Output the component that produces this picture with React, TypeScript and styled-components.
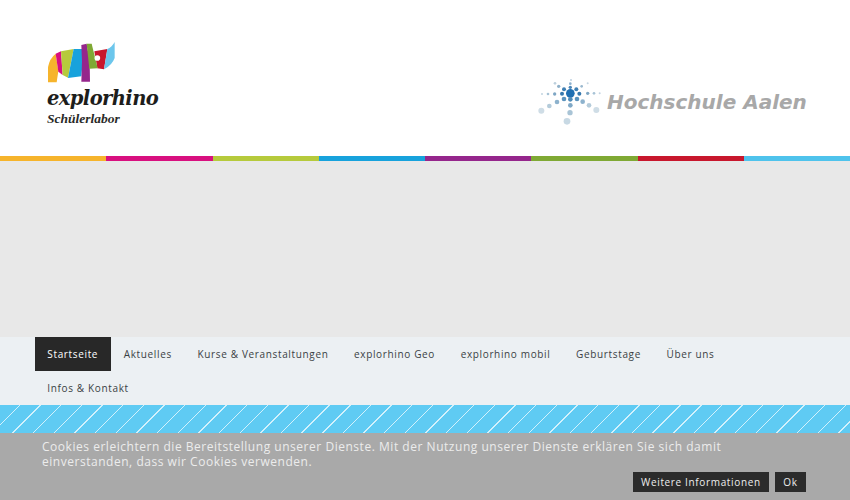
import React from "react";
import styled, { createGlobalStyle } from "styled-components";

const GlobalStyle = createGlobalStyle`
  html, body {
    margin: 0;
    padding: 0;
    height: 100%;
    overflow: hidden;
    background: #fff;
    font-family: "Open Sans", "Liberation Sans", sans-serif;
  }
`;

const menuItems = [
  "Startseite",
  "Aktuelles",
  "Kurse & Veranstaltungen",
  "explorhino Geo",
  "explorhino mobil",
  "Geburtstage",
  "Über uns",
  "Infos & Kontakt",
];

const stripeColors = [
  "#f6b42c",
  "#d8107f",
  "#b6ca3c",
  "#17a2dc",
  "#95268c",
  "#7fa934",
  "#c8172d",
  "#4fc3ec",
];

// dots of the star logo: x, y, radius, colour
const starDots: [number, number, number, string][] = [
  [137, 70, 13, "#1f6fb2"],
  [137, 52, 5, "#4a86b8"],
  [137, 41, 4, "#8fb2cf"],
  [139, 30, 3, "#bcd0e0"],
  [118, 58, 6, "#3f7fb3"],
  [102, 49, 5, "#8fb0c8"],
  [91, 40, 4, "#bdd0dd"],
  [155, 58, 6, "#3f7fb3"],
  [171, 49, 4, "#9bb9cf"],
  [189, 40, 3, "#c5d6e2"],
  [112, 71, 6, "#3678ae"],
  [90, 72, 5, "#7ea6c4"],
  [70, 72, 4, "#a8c3d6"],
  [52, 72, 3, "#c2d4e1"],
  [164, 71, 6, "#3678ae"],
  [189, 70, 5, "#7ea6c4"],
  [208, 70, 4, "#a8c3d6"],
  [225, 70, 3, "#c2d4e1"],
  [118, 87, 7, "#5b93bd"],
  [97, 96, 7, "#8db2cd"],
  [74, 108, 7, "#b4cbda"],
  [50, 122, 9, "#cfdde6"],
  [157, 87, 7, "#5b93bd"],
  [174, 95, 7, "#8db2cd"],
  [193, 106, 7, "#b4cbda"],
  [215, 120, 9, "#cfdde6"],
  [137, 88, 7, "#4f8cb9"],
  [137, 106, 7, "#7fa8c6"],
  [136, 128, 8, "#a9c4d6"],
  [127, 154, 10, "#c8d9e4"],
];

const App: React.FC = () => {
  return (
    <Page>
      <GlobalStyle />
      <Header>
        <RhinoLogo>
          <svg width="68" height="41" viewBox="9 12 204 123">
            <path d="M12 133 L12 88 Q16 62 35 47 L43 100 L38 133 Z" fill="#f6b42c" />
            <path d="M35 47 L51 40 L56 111 L43 101 Z" fill="#d8107f" />
            <path d="M51 40 L89 33 L72 119 L56 111 Z" fill="#b6ca3c" />
            <path d="M89 33 L120 33 L112 115 L72 120 Z" fill="#17a2dc" />
            <path d="M112 21 L128 17 L137 70 L138 131 L112 131 L114 70 Z" fill="#95268c" />
            <path d="M151 40 L190 33 L180 94 L160 91 Z" fill="#c8172d" />
            <path d="M128 17 L143 17 L161 91 L136 92 Z" fill="#7fa934" />
            <path d="M190 33 Q203 28 212 12 L212 60 Q204 82 180 94 Z" fill="#6cc6ec" />
            <circle cx="160" cy="60" r="8.5" fill="#fff" />
          </svg>
          <RhinoName>explorhino</RhinoName>
          <RhinoSub>Schülerlabor</RhinoSub>
        </RhinoLogo>
        <SchoolLogo>
          <svg width="64" height="49" viewBox="40 18 192 147">
            {starDots.map(([x, y, r, c], i) => (
              <circle key={i} cx={x} cy={y} r={r} fill={c} />
            ))}
          </svg>
          <SchoolName>Hochschule Aalen</SchoolName>
        </SchoolLogo>
      </Header>
      <ColorStripe>
        {stripeColors.map((c) => (
          <ColorPart key={c} $color={c} />
        ))}
      </ColorStripe>
      <Banner />
      <Nav>
        <NavList>
          {menuItems.map((item, i) => (
            <NavItem key={item} $active={i === 0}>
              {item}
            </NavItem>
          ))}
        </NavList>
      </Nav>
      <Hatch />
      <CookieBar>
        <CookieText>
          Cookies erleichtern die Bereitstellung unserer Dienste. Mit der Nutzung unserer Dienste
          erklären Sie sich damit einverstanden, dass wir Cookies verwenden.
        </CookieText>
        <CookieButtons>
          <CookieButton>Weitere Informationen</CookieButton>
          <CookieButton>Ok</CookieButton>
        </CookieButtons>
      </CookieBar>
    </Page>
  );
};

const Page = styled.div`
  width: 850px;
  height: 500px;
  position: relative;
  overflow: hidden;
`;

const Header = styled.header`
  height: 156px;
  box-sizing: border-box;
  padding: 42px 43px 0 47px;
  display: flex;
  justify-content: space-between;
  align-items: flex-start;
  background: #fff;
`;

const RhinoLogo = styled.div`
  display: flex;
  flex-direction: column;
  align-items: flex-start;
`;

const RhinoName = styled.div`
  font-family: "DejaVu Serif", serif;
  font-style: italic;
  font-weight: 700;
  font-size: 19.5px;
  line-height: 22px;
  margin-top: 5px;
  color: #1d1d1b;
  letter-spacing: -0.6px;
  white-space: nowrap;
`;

const RhinoSub = styled.div`
  font-family: "Liberation Serif", serif;
  font-style: italic;
  font-weight: 700;
  font-size: 13.5px;
  line-height: 16px;
  margin-top: 1px;
  color: #2a2a28;
  white-space: nowrap;
`;

const SchoolLogo = styled.div`
  display: flex;
  align-items: center;
  gap: 5px;
  margin-top: 34px;
`;

const SchoolName = styled.div`
  font-family: "DejaVu Sans", sans-serif;
  font-style: italic;
  font-weight: 700;
  font-size: 20px;
  line-height: 24px;
  color: #a8a8a8;
  white-space: nowrap;
  width: 200px;
  margin-top: 3px;
`;

const ColorStripe = styled.div`
  display: flex;
  height: 5px;
`;

const ColorPart = styled.div<{ $color: string }>`
  flex: 1;
  background: ${(p) => p.$color};
`;

const Banner = styled.div`
  height: 176px;
  background: #e8e8e8;
`;

const Nav = styled.nav`
  height: 68px;
  box-sizing: border-box;
  padding: 0 35px;
  background: #ecf0f3;
`;

const NavList = styled.div`
  display: flex;
  flex-wrap: wrap;
`;

const NavItem = styled.a<{ $active?: boolean }>`
  height: 34px;
  padding: 0 13.3px 0 12.3px;
  display: flex;
  align-items: center;
  font-size: 10px;
  letter-spacing: 0.65px;
  white-space: nowrap;
  color: ${(p) => (p.$active ? "#fff" : "#3a3f44")};
  background: ${(p) => (p.$active ? "#282828" : "transparent")};
`;

const Hatch = styled.div`
  height: 95px;
  background: repeating-linear-gradient(
    135deg,
    #5fcbf3 0,
    #5fcbf3 13.6px,
    #d2f1fc 13.6px,
    #d2f1fc 14.6px
  );
`;

const CookieBar = styled.div`
  position: absolute;
  left: 0;
  right: 0;
  bottom: 0;
  height: 67px;
  box-sizing: border-box;
  padding: 6px 44px 8px 42px;
  display: flex;
  flex-direction: column;
  background: #a9a9a9;
`;

const CookieText = styled.p`
  margin: 0;
  font-size: 12px;
  line-height: 15px;
  letter-spacing: 0.53px;
  color: #ececec;
`;

const CookieButtons = styled.div`
  margin-top: auto;
  display: flex;
  justify-content: flex-end;
  gap: 6px;
`;

const CookieButton = styled.a`
  height: 20px;
  padding: 0 8.3px;
  display: flex;
  align-items: center;
  font-size: 10px;
  letter-spacing: 0.65px;
  color: #eee;
  background: #2b2b2b;
`;

export default App;
